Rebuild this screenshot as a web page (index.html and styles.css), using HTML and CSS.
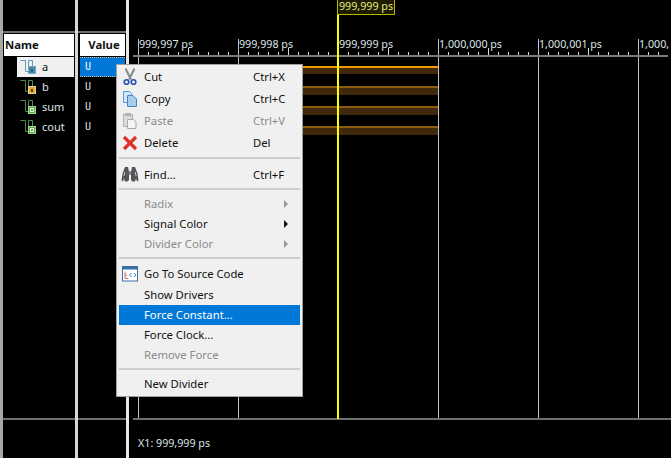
FILE: index.html
```html
<!DOCTYPE html>
<html lang="en">

<head>
    <meta charset="UTF-8">
    <meta name="viewport" content="width=device-width, initial-scale=1.0">
    <title>Waveform Viewer</title>
    <link rel="stylesheet" href="styles.css">
</head>

<body>

    <div id="viewer">
        <div class="pane pane-name">
            <div class="pane-top"></div>
            <div class="pane-head head-name">Name</div>
            <div class="name-row row-active">
                <svg class="signal-icon" width="17" height="18" viewBox="0 0 17 18">
                    <path d="M0.500 2.500h5v11h3V2.500h4v6" fill="none" stroke="#5f9cc0"/>
                    <rect x="8.500" y="8.500" width="7" height="7" fill="#4a86a8" stroke="#6fa6c4"/>
                    <rect x="11" y="11" width="2" height="3" fill="#2f6a6a"/>
                </svg>
                <span>a</span>
            </div>
            <div class="name-row">
                <svg class="signal-icon" width="17" height="18" viewBox="0 0 17 18">
                    <path d="M0.500 2.500h5v11h3V2.500h4v6" fill="none" stroke="#4f8a4f"/>
                    <rect x="8.500" y="8.500" width="7" height="7" fill="#e8a820" stroke="#d8d0b0"/>
                    <rect x="11" y="11" width="2" height="3" fill="#5a4410"/>
                </svg>
                <span>b</span>
            </div>
            <div class="name-row">
                <svg class="signal-icon" width="17" height="18" viewBox="0 0 17 18">
                    <path d="M0.500 2.500h5v11h3V2.500h4v6" fill="none" stroke="#4f8a4f"/>
                    <rect x="8.500" y="8.500" width="7" height="7" fill="#58b038" stroke="#a8cfa0"/>
                    <rect x="10.500" y="10.500" width="3" height="3" fill="none" stroke="#e6f4e0"/>
                </svg>
                <span>sum</span>
            </div>
            <div class="name-row">
                <svg class="signal-icon" width="17" height="18" viewBox="0 0 17 18">
                    <path d="M0.500 2.500h5v11h3V2.500h4v6" fill="none" stroke="#4f8a4f"/>
                    <rect x="8.500" y="8.500" width="7" height="7" fill="#58b038" stroke="#a8cfa0"/>
                    <rect x="10.500" y="10.500" width="3" height="3" fill="none" stroke="#e6f4e0"/>
                </svg>
                <span>cout</span>
            </div>
            <div class="pane-fill"></div>
            <div class="pane-foot"></div>
        </div>

        <div class="pane pane-value">
            <div class="pane-top"></div>
            <div class="pane-head head-value">Value</div>
            <div class="value-row value-active">U</div>
            <div class="value-row">U</div>
            <div class="value-row">U</div>
            <div class="value-row">U</div>
            <div class="pane-fill"></div>
            <div class="pane-foot"></div>
        </div>

        <div class="pane pane-wave">
            <div class="cursor-flag">999,999 ps</div>
            <div class="cursor-line"></div>

            <div class="ruler">
                <span class="tick-label" style="left: 10px">999,997 ps</span>
                <span class="tick-label" style="left: 110px">999,998 ps</span>
                <span class="tick-label" style="left: 210px">999,999 ps</span>
                <span class="tick-label" style="left: 310px">1,000,000 ps</span>
                <span class="tick-label" style="left: 410px">1,000,001 ps</span>
                <span class="tick-label" style="left: 510px">1,000,</span>
            </div>
            <div class="minor-ticks"></div>
            <div class="grid-lines"></div>

            <div class="wave wave-first" style="top: 66px"></div>
            <div class="wave" style="top: 86px"></div>
            <div class="wave" style="top: 106px"></div>
            <div class="wave" style="top: 126px"></div>

            <div class="pane-foot wave-foot"></div>
            <div class="cursor-readout">X1: 999,999 ps</div>
        </div>
    </div>

    <div id="menu">
        <div class="menu-item tall">
            <span class="menu-icon">
                <svg width="16" height="18" viewBox="0 0 16 18">
                    <path d="M3.500 0.500l5.500 11M12.500 0.500L7 11.500" stroke="#85898f" stroke-width="2" fill="none"/>
                    <circle cx="4.500" cy="14" r="2.300" fill="none" stroke="#2a4fb0" stroke-width="1.600"/>
                    <circle cx="11.500" cy="14" r="2.300" fill="none" stroke="#2a4fb0" stroke-width="1.600"/>
                </svg>
            </span>
            <span class="menu-label">Cut</span><span class="menu-key">Ctrl+X</span>
        </div>
        <div class="menu-item tall">
            <span class="menu-icon">
                <svg width="16" height="16" viewBox="0 0 16 16">
                    <path d="M1.500 0.500h6l2 2v9h-8z" fill="#d5e6f7" stroke="#5b9bd5"/>
                    <path d="M5.500 4.500h5.500l3.500 3.500v7.500h-9z" fill="#a9cdef" stroke="#3f86cc"/>
                </svg>
            </span>
            <span class="menu-label">Copy</span><span class="menu-key">Ctrl+C</span>
        </div>
        <div class="menu-item tall disabled">
            <span class="menu-icon">
                <svg width="16" height="16" viewBox="0 0 16 16">
                    <path d="M1.500 1.500h9v12h-9z" fill="#dcdcdc" stroke="#b0b0b0"/>
                    <path d="M3.500 0.500h5v2h-5z" fill="#c4c4c4" stroke="#a8a8a8"/>
                    <path d="M5.500 6.500h6l2.500 2.500v6.500h-8.500z" fill="#f4f4f4" stroke="#a8a8a8"/>
                </svg>
            </span>
            <span class="menu-label">Paste</span><span class="menu-key">Ctrl+V</span>
        </div>
        <div class="menu-item tall">
            <span class="menu-icon">
                <svg width="16" height="16" viewBox="0 0 16 16">
                    <path d="M2 2l12 12M14 2L2 14" stroke="#e0302a" stroke-width="3.200" fill="none"/>
                </svg>
            </span>
            <span class="menu-label">Delete</span><span class="menu-key">Del</span>
        </div>
        <div class="menu-sep"></div>
        <div class="menu-item tall item-find">
            <span class="menu-icon">
                <svg width="18" height="16" viewBox="0 0 18 16">
                    <path d="M0.500 14.500l1-7L4 1h3l1 5v8l-1.500 1.500H4L3 12.500 2 15.500zM17.500 14.500l-1-7L14 1h-3l-1 5v8l1.500 1.500H14l1-3 1 3z" fill="#54555a"/>
                    <path d="M8 5h2v4H8z" fill="#8a8a8a"/>
                    <path d="M3 10l.8-4M15 10l-.8-4" stroke="#c8c8c8" fill="none"/>
                </svg>
            </span>
            <span class="menu-label">Find...</span><span class="menu-key">Ctrl+F</span>
        </div>
        <div class="menu-sep"></div>
        <div class="menu-item disabled">
            <span class="menu-icon"></span>
            <span class="menu-label">Radix</span><span class="menu-arrow"></span>
        </div>
        <div class="menu-item">
            <span class="menu-icon"></span>
            <span class="menu-label">Signal Color</span><span class="menu-arrow"></span>
        </div>
        <div class="menu-item disabled">
            <span class="menu-icon"></span>
            <span class="menu-label">Divider Color</span><span class="menu-arrow"></span>
        </div>
        <div class="menu-sep"></div>
        <div class="menu-item tall">
            <span class="menu-icon">
                <svg width="16" height="16" viewBox="0 0 16 16">
                    <rect x="0.500" y="0.500" width="15" height="14.500" fill="#fff" stroke="#3c6fa8"/>
                    <rect x="1" y="1" width="14" height="2.500" fill="#3c6fa8"/>
                    <path d="M3 5.500v7h3M3 9h2" stroke="#c86a50" fill="none"/>
                    <path d="M9.500 7L7.500 9l2 2M12 7l2 2-2 2" stroke="#3c7fc8" fill="none"/>
                </svg>
            </span>
            <span class="menu-label">Go To Source Code</span>
        </div>
        <div class="menu-item">
            <span class="menu-icon"></span>
            <span class="menu-label">Show Drivers</span>
        </div>
        <div class="menu-item selected">
            <span class="menu-icon"></span>
            <span class="menu-label">Force Constant...</span>
        </div>
        <div class="menu-item">
            <span class="menu-icon"></span>
            <span class="menu-label">Force Clock...</span>
        </div>
        <div class="menu-item disabled">
            <span class="menu-icon"></span>
            <span class="menu-label">Remove Force</span>
        </div>
        <div class="menu-sep"></div>
        <div class="menu-item">
            <span class="menu-icon"></span>
            <span class="menu-label">New Divider</span>
        </div>
    </div>

</body>

</html>
```

FILE: styles.css
```css
html,
body {
    margin: 0;
    height: 100%;
    overflow: hidden;
    background-color: #000;
}

#viewer {
    display: flex;
    height: 458px;
    font-family: "Noto Sans", sans-serif;
    font-size: 10.7px;
    color: #dfe3e6;
}

.pane {
    display: flex;
    flex-direction: column;
    box-sizing: border-box;
}

.pane-name {
    width: 78px;
    border-left: 3px solid #a8a8a8;
    border-right: 3px solid #d8d8d8;
}

.pane-value {
    width: 51px;
    border-right: 3px solid #e8e8e8;
}

.pane-wave {
    position: relative;
    flex: 1;
}

.pane-top {
    height: 31px;
    border-bottom: 2px solid #6e6e6e;
}

.pane-head {
    height: 22px;
    margin: 1px;
    background-color: #fff;
    color: #111;
    font-size: 11.3px;
    font-weight: bold;
    line-height: 21px;
}

.head-name {
    padding-left: 1px;
}

.head-value {
    margin-left: 2px;
    padding-left: 3px;
    text-align: center;
}

.name-row {
    display: flex;
    align-items: center;
    gap: 5px;
    height: 20px;
    margin: 0 1px 0 14px;
    padding-left: 3px;
}

.name-row span {
    padding-bottom: 2px;
    font-size: 11px;
}

.row-active {
    background-color: #f0f0f0;
    color: #111;
}

.signal-icon {
    flex: none;
}

.value-row {
    height: 20px;
    margin: 0 1px 0 2px;
    padding-left: 5px;
    box-sizing: border-box;
    font-family: "DejaVu Sans Mono", monospace;
    font-size: 10px;
    line-height: 19px;
}

.value-active {
    background-color: #0078d7;
    border-top: 1px dotted #e0b070;
    border-bottom: 1px dotted #e0b070;
    color: #fff;
    line-height: 17px;
}

.pane-fill {
    flex: 1;
}

.pane-foot {
    height: 38px;
    border-top: 2px solid #6e6e6e;
}

/* waveform canvas, coordinates are relative to the pane */
.ruler {
    position: absolute;
    top: 39px;
    left: 0;
    right: 0;
    height: 16px;
}

.tick-label {
    position: absolute;
    top: -1px;
    line-height: 13px;
    white-space: nowrap;
}

.minor-ticks {
    position: absolute;
    top: 52px;
    left: 9px;
    width: 530px;
    height: 3px;
    background-image: repeating-linear-gradient(to right, #ddd 0, #ddd 1px, transparent 1px, transparent 10px);
}

.minor-ticks::after {
    content: "";
    position: absolute;
    left: 0;
    top: -4px;
    width: 100%;
    height: 4px;
    background-image: repeating-linear-gradient(to right, transparent 0, transparent 50px, #ddd 50px, #ddd 51px, transparent 51px, transparent 100px);
}

.grid-lines {
    position: absolute;
    top: 39px;
    left: 9px;
    width: 501px;
    height: 379px;
    background-image: repeating-linear-gradient(to right, #c4c4c4 0, #c4c4c4 1px, transparent 1px, transparent 100px);
}

.grid-lines::before {
    content: "";
    position: absolute;
    left: -5px;
    top: 16px;
    width: 535px;
    height: 2px;
    background-color: #7c7c7c;
}

.wave {
    position: absolute;
    left: 9px;
    width: 300px;
    height: 9px;
    box-sizing: border-box;
    background-color: #40290a;
    border-top: 2px solid #8a5c0c;
}

.wave-first {
    height: 8px;
    border-top-color: #f09a00;
}

.wave-foot {
    position: absolute;
    top: 418px;
    left: 4px;
    right: 0;
    height: 2px;
    border-top: 2px solid #6e6e6e;
    box-sizing: border-box;
}

.cursor-line {
    position: absolute;
    top: 15px;
    left: 208px;
    width: 2px;
    height: 404px;
    background-color: #ffff00;
    z-index: 1;
}

.cursor-flag {
    position: absolute;
    top: 0;
    left: 208px;
    height: 14px;
    padding: 0 1px;
    border: 1px solid #b8b800;
    border-top: none;
    background-color: #1c1c00;
    color: #e8e880;
    line-height: 13px;
    white-space: nowrap;
    z-index: 1;
}

.cursor-readout {
    position: absolute;
    top: 436px;
    left: 9px;
    line-height: 15px;
}

/* context menu */
#menu {
    position: absolute;
    top: 64px;
    left: 116px;
    width: 187px;
    height: 333px;
    box-sizing: border-box;
    padding: 1px 2px;
    background-color: #f0f0f0;
    border: 1px solid #a0a0a0;
    font-family: "Noto Sans", sans-serif;
    font-size: 11.3px;
    color: #111;
    z-index: 5;
}

.menu-item {
    display: flex;
    align-items: center;
    height: 20px;
}

.menu-item.tall {
    height: 22px;
}

.menu-item.disabled {
    color: #8a8a8a;
}

.menu-item.selected {
    background-color: #0078d7;
    color: #fff;
}

.menu-icon {
    display: flex;
    flex: none;
    align-items: center;
    justify-content: center;
    width: 22px;
    margin-right: 3px;
}

.menu-label,
.menu-key {
    padding-bottom: 2px;
}

.item-find .menu-label,
.item-find .menu-key {
    padding-bottom: 0;
}

.menu-label {
    flex: 1;
    white-space: nowrap;
}

.menu-key {
    width: 47px;
}

.menu-arrow {
    width: 0;
    height: 0;
    margin-right: 12px;
    border-left: 4px solid #111;
    border-top: 4px solid transparent;
    border-bottom: 4px solid transparent;
}

.disabled .menu-arrow {
    border-left-color: #9a9a9a;
}

.menu-sep {
    height: 2px;
    margin: 3px 0 4px;
    background-color: #cdcdcd;
}
```
